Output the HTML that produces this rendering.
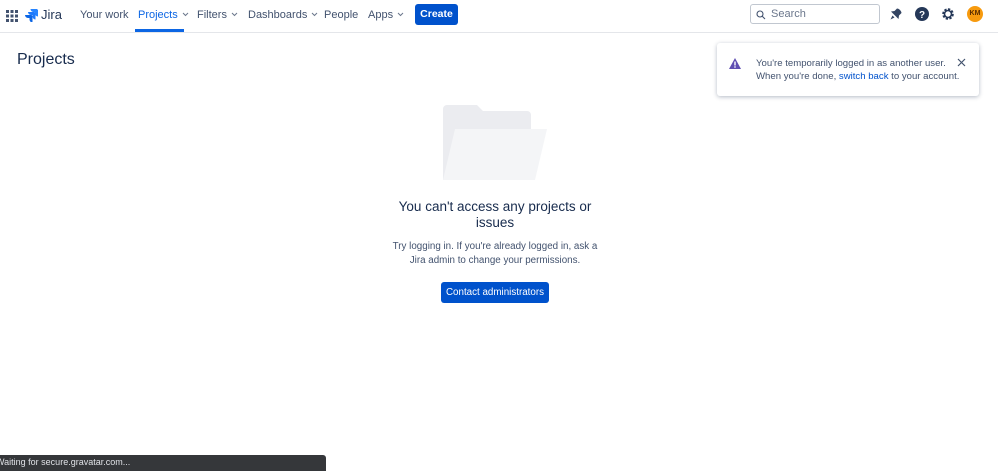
<!DOCTYPE html>
<html><head><style>
body{margin:0;width:998px;height:471px;overflow:hidden;background:#fff;font-family:"Liberation Sans",sans-serif;color:#172b4d;position:relative}
.nav{position:absolute;left:0;top:0;width:998px;height:32px;border-bottom:1px solid #e4e6ea}
.n{position:absolute;top:9px;font-size:11px;color:#42526e;white-space:nowrap}
.chev{display:inline-block;margin-left:4px;vertical-align:middle;margin-top:-2px}
</style></head><body>
<div class="nav">
<svg style="position:absolute;left:6px;top:10px" width="12" height="12"><g fill="#42526e"><rect x="0" y="0" width="3" height="3"/><rect x="4.5" y="0" width="3" height="3"/><rect x="9" y="0" width="3" height="3"/><rect x="0" y="4.5" width="3" height="3"/><rect x="4.5" y="4.5" width="3" height="3"/><rect x="9" y="4.5" width="3" height="3"/><rect x="0" y="9" width="3" height="3"/><rect x="4.5" y="9" width="3" height="3"/><rect x="9" y="9" width="3" height="3"/></g></svg>
<svg style="position:absolute;left:25px;top:8px" width="14" height="14" viewBox="0 0 14 14"><path d="M13 1H6.5a3 3 0 003 3H11v1.5a3 3 0 003 3V2z" fill="#2684ff" transform="translate(-1 0)"/><path d="M9.5 4H3a3 3 0 003 3h1.5v1.5a3 3 0 003 3V5z" fill="#1d7afc"/><path d="M6.5 7H0a3 3 0 003 3h1.5v1.5a3 3 0 003 3V8z" fill="#0c66e4"/></svg>
<span class="n" style="left:41px;top:7px;font-size:13px;color:#253858">Jira</span>
<span class="n" style="left:80px">Your work</span>
<span class="n" style="left:138px;color:#0c66e4">Projects<svg class="chev" width="7" height="5"><path d="M1 1l2.5 2.5L6 1" fill="none" stroke="#6b778c" stroke-width="1"/></svg></span>
<div style="position:absolute;left:135px;top:29px;width:49px;height:3px;background:#0c66e4"></div>
<span class="n" style="left:197px">Filters<svg class="chev" width="7" height="5"><path d="M1 1l2.5 2.5L6 1" fill="none" stroke="#6b778c" stroke-width="1"/></svg></span>
<span class="n" style="left:248px">Dashboards<svg class="chev" width="7" height="5"><path d="M1 1l2.5 2.5L6 1" fill="none" stroke="#6b778c" stroke-width="1"/></svg></span>
<span class="n" style="left:324px">People</span>
<span class="n" style="left:368px">Apps<svg class="chev" width="7" height="5"><path d="M1 1l2.5 2.5L6 1" fill="none" stroke="#6b778c" stroke-width="1"/></svg></span>
<div style="position:absolute;left:415px;top:4px;width:43px;height:21px;background:#0052cc;border-radius:3px;color:#fff;font-size:10.5px;font-weight:bold;text-align:center;line-height:21px">Create</div>
<div style="position:absolute;left:750px;top:4px;width:128px;height:18px;border:1px solid #c1c7d0;border-radius:3px;background:#fff"><svg style="position:absolute;left:5px;top:5px" width="10" height="10"><circle cx="4" cy="4" r="3" fill="none" stroke="#42526e" stroke-width="1.1"/><path d="M6 6l3 3" stroke="#42526e" stroke-width="1.1"/></svg><span style="position:absolute;left:20px;top:3px;font-size:11px;color:#6b778c">Search</span></div>
<svg style="position:absolute;left:889px;top:7px" width="14" height="14" viewBox="0 0 14 14"><path d="M8 1.5c2 0 4.5 2.5 4.5 4.5L10 8.5 9.5 12 2 4.5 5.5 4z" fill="#344563"/><path d="M3.5 8.5L1.5 12.5 5.5 10.5z" fill="#344563"/></svg>
<svg style="position:absolute;left:915px;top:7px" width="14" height="14"><circle cx="7" cy="7" r="7" fill="#253858"/><text x="7" y="11" font-size="10" font-weight="bold" fill="#fff" text-anchor="middle" font-family="Liberation Sans">?</text></svg>
<svg style="position:absolute;left:941px;top:7px" width="14" height="14" viewBox="0 0 14 14"><circle cx="7" cy="7" r="4.5" fill="none" stroke="#253858" stroke-width="2.6" stroke-dasharray="2.2 1.3"/><circle cx="7" cy="7" r="3.5" fill="none" stroke="#253858" stroke-width="1.6"/></svg>
<div style="position:absolute;left:967px;top:6px;width:16px;height:16px;border-radius:50%;background:#f79a0e;color:#5a2d00;font-size:7px;font-weight:bold;text-align:center;line-height:16px">KM</div>
</div>
<div style="position:absolute;left:17px;top:51px;font-size:16px;color:#172b4d">Projects</div>
<div style="position:absolute;left:717px;top:43px;width:262px;height:53px;background:#fff;border-radius:3px;box-shadow:0 1px 4px rgba(9,30,66,.3)">
<svg style="position:absolute;left:12px;top:15px" width="12" height="11"><path d="M6 0L12 11H0z" fill="#5e4db2"/><rect x="5.3" y="3.5" width="1.4" height="4" fill="#fff"/><rect x="5.3" y="8.3" width="1.4" height="1.4" fill="#fff"/></svg>
<div style="position:absolute;left:39px;top:14px;font-size:9.6px;line-height:13px;color:#42526e;white-space:nowrap">You're temporarily logged in as another user.<br>When you're done, <span style="color:#0052cc">switch back</span> to your account.</div>
<svg style="position:absolute;left:240px;top:15px" width="9" height="9"><path d="M1 1l7 7M8 1L1 8" stroke="#42526e" stroke-width="1.2"/></svg>
</div>
<svg style="position:absolute;left:443px;top:105px" width="105" height="76"><path d="M0 4a4 4 0 014-4h30l6 6h44a4 4 0 014 4v65H0z" fill="#ebecf0"/><path d="M12 24h92l-12 51H0z" fill="#f4f5f7"/></svg>
<div style="position:absolute;left:380px;top:199px;width:230px;text-align:center;font-size:13.5px;line-height:16px;color:#172b4d">You can't access any projects or<br>issues</div>
<div style="position:absolute;left:370px;top:240px;width:250px;text-align:center;font-size:9.8px;line-height:13.5px;color:#42526e">Try logging in. If you're already logged in, ask a<br>Jira admin to change your permissions.</div>
<div style="position:absolute;left:441px;top:282px;width:108px;height:21px;background:#0052cc;border-radius:3px;color:#fff;font-size:9.8px;text-align:center;line-height:21px">Contact administrators</div>
<div style="position:absolute;left:0;top:455px;width:326px;height:16px;background:#35373a;border-top-right-radius:3px;color:#dfe1e6;font-size:9px;line-height:15px;white-space:nowrap;overflow:hidden;text-indent:-4px">Waiting for secure.gravatar.com...</div>
</body></html>
